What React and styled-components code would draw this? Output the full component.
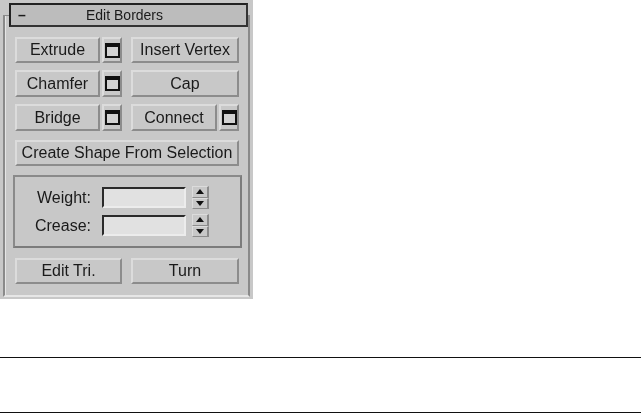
import styled, { createGlobalStyle } from 'styled-components';

const GlobalStyle = createGlobalStyle`
  html, body {
    margin: 0;
    padding: 0;
    background: #fff;
    font-family: "Liberation Sans", Arial, sans-serif;
  }
`;

const Panel = styled.div`
  width: 253px;
  height: 299px;
  box-sizing: border-box;
  padding: 3px 0 0 3px;
  background: #c8c8c8;
  color: #1a1a1a;
  font-size: 16px;
  filter: blur(0.35px);
`;
const TitleBar = styled.div`
  position: relative;
  z-index: 1;
  box-sizing: border-box;
  width: 239px;
  height: 24px;
  margin-left: 6px;
  padding: 0 10px 0 7px;
  display: flex;
  align-items: center;
  font-size: 14px;
  background: #bcbcbc;
  border: 2px solid #222;
  border-right-color: #333;
  border-bottom-color: #333;
`;
const Collapse = styled.span`
  width: 60px;
  font-weight: 700;
`;
const TitleText = styled.span`
  flex: 1;
  margin-left: 8px;
`;
const Frame = styled.div`
  box-sizing: border-box;
  width: 247px;
  height: 282px;
  margin-top: -12px;
  padding: 21px 0 0 10px;
  border-left: 2px solid #8a8a8a;
  border-right: 2px solid #8a8a8a;
  border-top: 1px solid #8a8a8a;
  border-bottom: 2px solid #e6e6e6;
  box-shadow: inset 1px 0 0 #e6e6e6;
`;
const Rows = styled.div`
  display: flex;
  flex-direction: column;
`;
const Row = styled.div`
  display: flex;
  gap: 9px;
  height: ${(p) => p.$height || 27}px;
  margin-top: ${(p) => p.$gap || 0}px;
`;
const Cell = styled.div`
  display: flex;
  gap: 2px;
  width: ${(p) => p.$width || 107}px;
`;
const Button = styled.div`
  box-sizing: border-box;
  flex: 1;
  height: 100%;
  display: flex;
  align-items: center;
  justify-content: center;
  white-space: nowrap;
  background: #c8c8c8;
  border-top: 2px solid #dcdcdc;
  border-left: 2px solid #dcdcdc;
  border-right: 2px solid #8c8c8c;
  border-bottom: 2px solid #8c8c8c;
`;
const OptionsButton = styled(Button)`
  flex: none;
  width: 20px;
`;
const WideButton = styled(Button)`
  flex: none;
  width: 224px;
`;
const WindowGlyph = styled.span`
  box-sizing: border-box;
  flex: none;
  width: 15px;
  height: 15px;
  background: #d2d2d2;
  border: 2px solid #111;
  border-top-width: 4px;
`;
const GroupBox = styled.div`
  box-sizing: border-box;
  width: 229px;
  height: 73px;
  margin: 9px 0 10px -2px;
  padding: 10px 0 0 12px;
  display: flex;
  flex-direction: column;
  gap: 7px;
  border: 2px solid #8a8a8a;
  border-right-color: #7c7c7c;
  border-bottom-color: #7c7c7c;
`;
const FieldRow = styled.div`
  display: flex;
  align-items: center;
  height: 21px;
`;
const Label = styled.span`
  box-sizing: border-box;
  width: 75px;
  padding-right: 11px;
  text-align: right;
`;
const Input = styled.div`
  box-sizing: border-box;
  width: 84px;
  height: 21px;
  background: #e1e1e1;
  border: 2px solid #ececec;
  border-top-color: #2a2a2a;
  border-left-color: #2a2a2a;
`;
const Spinner = styled.div`
  flex: none;
  width: 17px;
  height: 23px;
  margin-left: 6px;
  display: flex;
  flex-direction: column;
`;
const SpinPart = styled.div`
  box-sizing: border-box;
  flex: 1;
  display: flex;
  align-items: center;
  justify-content: center;
  border-top: 1px solid #dcdcdc;
  border-left: 1px solid #dcdcdc;
  border-right: 2px solid #8c8c8c;
  border-bottom: 1px solid #8c8c8c;
`;
const Arrow = styled.span`
  width: 0;
  height: 0;
  border-left: 4px solid transparent;
  border-right: 4px solid transparent;
  border-${(p) => (p.$up ? 'bottom' : 'top')}: 5px solid #111;
`;
const Rule = styled.hr`
  margin: 0;
  border: 0;
  height: 1px;
  background: #111;
`;
const Rules = styled.div`
  display: flex;
  flex-direction: column;
  gap: 54px;
  margin-top: 58px;
`;

const ToolButton = ({ label, options, width }) => (
  <Cell $width={width}>
    <Button>{label}</Button>
    {options && (
      <OptionsButton>
        <WindowGlyph />
      </OptionsButton>
    )}
  </Cell>
);

const Field = ({ label }) => (
  <FieldRow>
    <Label>{label}</Label>
    <Input />
    <Spinner>
      <SpinPart>
        <Arrow $up />
      </SpinPart>
      <SpinPart>
        <Arrow />
      </SpinPart>
    </Spinner>
  </FieldRow>
);

const App = () => (
  <>
    <GlobalStyle />
    <Panel>
      <TitleBar>
        <Collapse>–</Collapse>
        <TitleText>Edit Borders</TitleText>
      </TitleBar>
      <Frame>
        <Rows>
          <Row $height={26}>
            <ToolButton label='Extrude' options />
            <ToolButton label='Insert Vertex' width={108} />
          </Row>
          <Row $gap={7}>
            <ToolButton label='Chamfer' options />
            <ToolButton label='Cap' width={108} />
          </Row>
          <Row $gap={7}>
            <ToolButton label='Bridge' options />
            <ToolButton label='Connect' options width={108} />
          </Row>
          <Row $gap={9} $height={26}>
            <WideButton>Create Shape From Selection</WideButton>
          </Row>
        </Rows>
        <GroupBox>
          <Field label='Weight:' />
          <Field label='Crease:' />
        </GroupBox>
        <Row $height={26}>
          <ToolButton label='Edit Tri.' />
          <ToolButton label='Turn' width={108} />
        </Row>
      </Frame>
    </Panel>
    <Rules>
      <Rule />
      <Rule />
    </Rules>
  </>
);

export default App;
